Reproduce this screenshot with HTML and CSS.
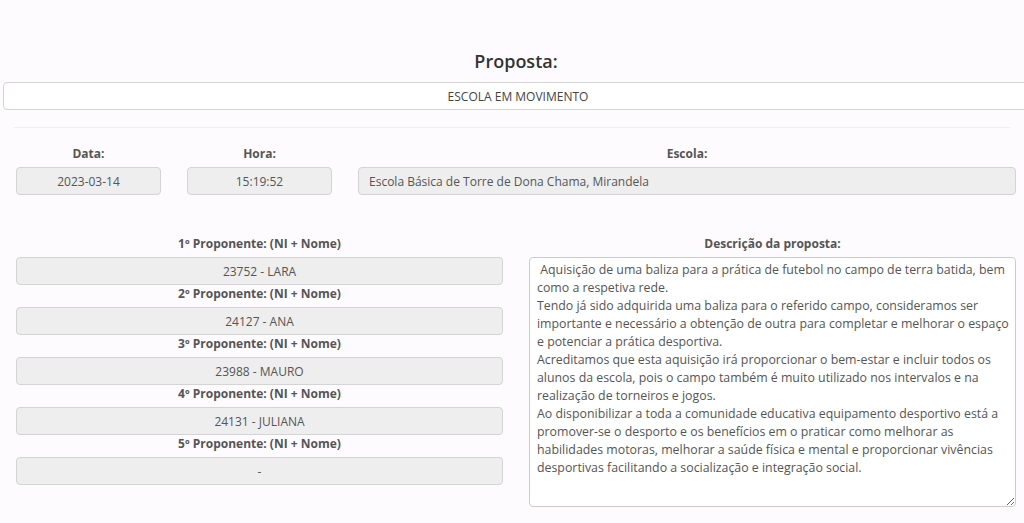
FILE: index.html
```html
<!DOCTYPE html>
<html lang="pt">
<head>
    <meta charset="UTF-8">
    <meta name="viewport" content="width=device-width, initial-scale=1.0">
    <title>Proposta</title>
    <link rel="stylesheet" href="styles.css">
</head>
<body>

    <div class="page">
        <h2 class="title">Proposta:</h2>
        <input class="field field-title" type="text" value="ESCOLA EM MOVIMENTO" readonly>

        <hr class="divider">

        <!-- Dados gerais -->
        <div class="info-row">
            <div class="group group-small">
                <label>Data:</label>
                <input class="field" type="text" value="2023-03-14" readonly>
            </div>
            <div class="group group-small">
                <label>Hora:</label>
                <input class="field" type="text" value="15:19:52" readonly>
            </div>
            <div class="group group-wide">
                <label>Escola:</label>
                <input class="field field-left" type="text" value="Escola Básica de Torre de Dona Chama, Mirandela" readonly>
            </div>
        </div>

        <!-- Proponentes e descricao -->
        <div class="detail-row">
            <div class="col">
                <label>1º Proponente: (NI + Nome)</label>
                <input class="field" type="text" value="23752 - LARA" readonly>
                <label>2º Proponente: (NI + Nome)</label>
                <input class="field" type="text" value="24127 - ANA" readonly>
                <label>3º Proponente: (NI + Nome)</label>
                <input class="field" type="text" value="23988 - MAURO" readonly>
                <label>4º Proponente: (NI + Nome)</label>
                <input class="field" type="text" value="24131 - JULIANA" readonly>
                <label>5º Proponente: (NI + Nome)</label>
                <input class="field" type="text" value="-" readonly>
            </div>
            <div class="col">
                <label>Descrição da proposta:</label>
                <textarea class="description" readonly> Aquisição de uma baliza para a prática de futebol no campo de terra batida, bem como a respetiva rede.
Tendo já sido adquirida uma baliza para o referido campo, consideramos ser importante e necessário a obtenção de outra para completar e melhorar o espaço e potenciar a prática desportiva.
Acreditamos que esta aquisição irá proporcionar o bem-estar e incluir todos os alunos da escola, pois o campo também é muito utilizado nos intervalos e na realização de torneiros e jogos.
Ao disponibilizar a toda a comunidade educativa equipamento desportivo está a promover-se o desporto e os benefícios em o praticar como melhorar as habilidades motoras, melhorar a saúde física e mental e proporcionar vivências desportivas facilitando a socialização e integração social.</textarea>
            </div>
        </div>
    </div>

</body>
</html>
```

FILE: styles.css
```css
body {
    font-family: "Open Sans", "Noto Sans", sans-serif;
    background-color: #fdfbfd;
    color: #555;
    margin: 0;
    padding: 0;
    overflow: hidden;
}
.page {
    padding: 0 8px 0 16px;
}
.title {
    text-align: center;
    font-size: 18px;
    font-weight: 600;
    color: #333;
    margin: 49px 0 9px 0;
    line-height: 24px;
}
.field {
    display: block;
    box-sizing: border-box;
    width: 100%;
    height: 28px;
    padding: 0 10px;
    border: 1px solid #d4d4d4;
    border-radius: 4px;
    background-color: #eeeeee;
    font-family: inherit;
    font-size: 12px;
    color: #555;
    text-align: center;
    outline: none;
}
.field-title {
    width: 1030px;
    margin-left: -13px;
    background-color: #fff;
    color: #444;
}
.field-left {
    text-align: left;
}
.divider {
    border: none;
    border-top: 1px solid #eeeeee;
    margin: 17px 6px 16px -2px;
}
label {
    display: block;
    text-align: center;
    font-weight: 700;
    font-size: 12px;
    line-height: 16px;
    padding: 1px 0 5px 0;
    color: #555;
}
.info-row {
    display: flex;
    gap: 26px;
    margin-top: 17px;
}
.group-small {
    width: 145px;
}
.group-wide {
    flex: 1;
}
.detail-row {
    display: flex;
    gap: 26px;
    margin-top: 40px;
}
.col {
    flex: 1;
}
.description {
    display: block;
    box-sizing: border-box;
    width: 100%;
    height: 250px;
    padding: 3px 0 3px 7px;
    border: 1px solid #ccc;
    border-radius: 4px;
    background-color: #fff;
    font-family: inherit;
    font-size: 12.35px;
    line-height: 18px;
    color: #555;
    resize: vertical;
    outline: none;
}
```
